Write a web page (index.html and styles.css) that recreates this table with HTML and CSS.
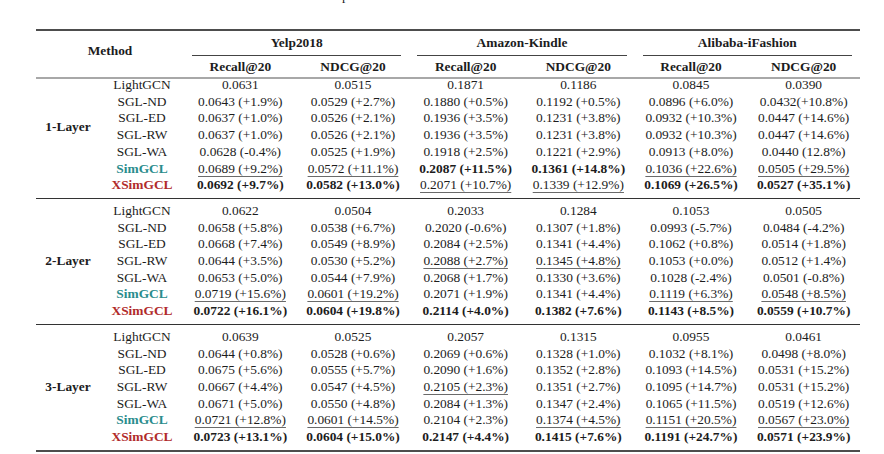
FILE: index.html
```html
<!DOCTYPE html>
<html>
<head>
<meta charset="utf-8">
<link rel="stylesheet" href="styles.css">
</head>
<body>
<div class="page">
  <div class="caption"><span class="cap-text">p</span></div>
  <div class="rule-thick"></div>
  <div class="head">
    <div class="method">Method</div>
    <div class="group">Yelp2018</div>
    <div class="group">Amazon-Kindle</div>
    <div class="group">Alibaba-iFashion</div>
    <div class="sub">Recall@20</div>
    <div class="sub">NDCG@20</div>
    <div class="sub">Recall@20</div>
    <div class="sub">NDCG@20</div>
    <div class="sub">Recall@20</div>
    <div class="sub">NDCG@20</div>
  </div>
  <div class="midrule"></div>

  <div class="block first">
    <div class="lbl span6">1-Layer</div>
    <div class="m">LightGCN</div><div class="c">0.0631</div><div class="c">0.0515</div><div class="c">0.1871</div><div class="c">0.1186</div><div class="c">0.0845</div><div class="c">0.0390</div>
    <div class="m">SGL-ND</div><div class="c">0.0643 (+1.9%)</div><div class="c">0.0529 (+2.7%)</div><div class="c">0.1880 (+0.5%)</div><div class="c">0.1192 (+0.5%)</div><div class="c">0.0896 (+6.0%)</div><div class="c">0.0432(+10.8%)</div>
    <div class="m">SGL-ED</div><div class="c">0.0637 (+1.0%)</div><div class="c">0.0526 (+2.1%)</div><div class="c">0.1936 (+3.5%)</div><div class="c">0.1231 (+3.8%)</div><div class="c">0.0932 (+10.3%)</div><div class="c">0.0447 (+14.6%)</div>
    <div class="m">SGL-RW</div><div class="c">0.0637 (+1.0%)</div><div class="c">0.0526 (+2.1%)</div><div class="c">0.1936 (+3.5%)</div><div class="c">0.1231 (+3.8%)</div><div class="c">0.0932 (+10.3%)</div><div class="c">0.0447 (+14.6%)</div>
    <div class="m">SGL-WA</div><div class="c">0.0628 (-0.4%)</div><div class="c">0.0525 (+1.9%)</div><div class="c">0.1918 (+2.5%)</div><div class="c">0.1221 (+2.9%)</div><div class="c">0.0913 (+8.0%)</div><div class="c">0.0440 (12.8%)</div>
    <div class="m sim">SimGCL</div><div class="c"><span class="u">0.0689 (+9.2%)</span></div><div class="c"><span class="u">0.0572 (+11.1%)</span></div><div class="c b">0.2087 (+11.5%)</div><div class="c b">0.1361 (+14.8%)</div><div class="c"><span class="u">0.1036 (+22.6%)</span></div><div class="c"><span class="u">0.0505 (+29.5%)</span></div>
    <div class="m xsim">XSimGCL</div><div class="c b">0.0692 (+9.7%)</div><div class="c b">0.0582 (+13.0%)</div><div class="c"><span class="u">0.2071 (+10.7%)</span></div><div class="c"><span class="u">0.1339 (+12.9%)</span></div><div class="c b">0.1069 (+26.5%)</div><div class="c b">0.0527 (+35.1%)</div>
  </div>
  <div class="rule"></div>

  <div class="block second">
    <div class="lbl span7">2-Layer</div>
    <div class="m">LightGCN</div><div class="c">0.0622</div><div class="c">0.0504</div><div class="c">0.2033</div><div class="c">0.1284</div><div class="c">0.1053</div><div class="c">0.0505</div>
    <div class="m">SGL-ND</div><div class="c">0.0658 (+5.8%)</div><div class="c">0.0538 (+6.7%)</div><div class="c">0.2020 (-0.6%)</div><div class="c">0.1307 (+1.8%)</div><div class="c">0.0993 (-5.7%)</div><div class="c">0.0484 (-4.2%)</div>
    <div class="m">SGL-ED</div><div class="c">0.0668 (+7.4%)</div><div class="c">0.0549 (+8.9%)</div><div class="c">0.2084 (+2.5%)</div><div class="c">0.1341 (+4.4%)</div><div class="c">0.1062 (+0.8%)</div><div class="c">0.0514 (+1.8%)</div>
    <div class="m">SGL-RW</div><div class="c">0.0644 (+3.5%)</div><div class="c">0.0530 (+5.2%)</div><div class="c"><span class="u">0.2088 (+2.7%)</span></div><div class="c"><span class="u">0.1345 (+4.8%)</span></div><div class="c">0.1053 (+0.0%)</div><div class="c">0.0512 (+1.4%)</div>
    <div class="m">SGL-WA</div><div class="c">0.0653 (+5.0%)</div><div class="c">0.0544 (+7.9%)</div><div class="c">0.2068 (+1.7%)</div><div class="c">0.1330 (+3.6%)</div><div class="c">0.1028 (-2.4%)</div><div class="c">0.0501 (-0.8%)</div>
    <div class="m sim">SimGCL</div><div class="c"><span class="u">0.0719 (+15.6%)</span></div><div class="c"><span class="u">0.0601 (+19.2%)</span></div><div class="c">0.2071 (+1.9%)</div><div class="c">0.1341 (+4.4%)</div><div class="c"><span class="u">0.1119 (+6.3%)</span></div><div class="c"><span class="u">0.0548 (+8.5%)</span></div>
    <div class="m xsim">XSimGCL</div><div class="c b">0.0722 (+16.1%)</div><div class="c b">0.0604 (+19.8%)</div><div class="c b">0.2114 (+4.0%)</div><div class="c b">0.1382 (+7.6%)</div><div class="c b">0.1143 (+8.5%)</div><div class="c b">0.0559 (+10.7%)</div>
  </div>
  <div class="rule"></div>

  <div class="block third">
    <div class="lbl span7">3-Layer</div>
    <div class="m">LightGCN</div><div class="c">0.0639</div><div class="c">0.0525</div><div class="c">0.2057</div><div class="c">0.1315</div><div class="c">0.0955</div><div class="c">0.0461</div>
    <div class="m">SGL-ND</div><div class="c">0.0644 (+0.8%)</div><div class="c">0.0528 (+0.6%)</div><div class="c">0.2069 (+0.6%)</div><div class="c">0.1328 (+1.0%)</div><div class="c">0.1032 (+8.1%)</div><div class="c">0.0498 (+8.0%)</div>
    <div class="m">SGL-ED</div><div class="c">0.0675 (+5.6%)</div><div class="c">0.0555 (+5.7%)</div><div class="c">0.2090 (+1.6%)</div><div class="c">0.1352 (+2.8%)</div><div class="c">0.1093 (+14.5%)</div><div class="c">0.0531 (+15.2%)</div>
    <div class="m">SGL-RW</div><div class="c">0.0667 (+4.4%)</div><div class="c">0.0547 (+4.5%)</div><div class="c"><span class="u">0.2105 (+2.3%)</span></div><div class="c">0.1351 (+2.7%)</div><div class="c">0.1095 (+14.7%)</div><div class="c">0.0531 (+15.2%)</div>
    <div class="m">SGL-WA</div><div class="c">0.0671 (+5.0%)</div><div class="c">0.0550 (+4.8%)</div><div class="c">0.2084 (+1.3%)</div><div class="c">0.1347 (+2.4%)</div><div class="c">0.1065 (+11.5%)</div><div class="c">0.0519 (+12.6%)</div>
    <div class="m sim">SimGCL</div><div class="c"><span class="u">0.0721 (+12.8%)</span></div><div class="c"><span class="u">0.0601 (+14.5%)</span></div><div class="c">0.2104 (+2.3%)</div><div class="c"><span class="u">0.1374 (+4.5%)</span></div><div class="c"><span class="u">0.1151 (+20.5%)</span></div><div class="c"><span class="u">0.0567 (+23.0%)</span></div>
    <div class="m xsim">XSimGCL</div><div class="c b">0.0723 (+13.1%)</div><div class="c b">0.0604 (+15.0%)</div><div class="c b">0.2147 (+4.4%)</div><div class="c b">0.1415 (+7.6%)</div><div class="c b">0.1191 (+24.7%)</div><div class="c b">0.0571 (+23.9%)</div>
  </div>
  <div class="rule-thick bottom"></div>
</div>
</body>
</html>
```

FILE: styles.css
```css
html, body {
  margin: 0;
  padding: 0;
  background: #ffffff;
}

body {
  font-family: "Liberation Serif", "Times New Roman", serif;
  font-size: 13.4px;
  color: #1c1c1c;
}

.page {
  width: 824px;
  margin-left: 36px;
}

.caption {
  height: 5px;
  overflow: hidden;
  padding-left: 306px;
  margin-bottom: 24px;
}

.cap-text {
  display: block;
  line-height: 14px;
  margin-top: -11px;
}

.rule-thick {
  height: 2px;
  background: #4d4d4d;
}

.head,
.block {
  display: grid;
  grid-template-columns: 64px 84px repeat(6, 1fr);
}

.method {
  grid-column: 1 / 3;
  grid-row: 1 / 3;
  text-align: center;
  font-weight: 700;
  line-height: 16.7px;
  padding-top: 11.7px;
}

.group {
  grid-column: span 2;
  margin: 0 8px;
  padding: 3.7px 0;
  line-height: 16.7px;
  border-bottom: 1px solid #444444;
  text-align: center;
  font-weight: 700;
}

.sub {
  text-align: center;
  font-weight: 700;
  line-height: 16.7px;
  padding: 2.6px 0 1.7px;
}

.midrule {
  height: 2px;
  background: #a8a8a8;
}

.block {
  grid-auto-rows: 16.7px;
  line-height: 16.7px;
}

.block.first {
  margin-top: -2px;
  padding-bottom: 4.3px;
}

.block.second {
  padding: 3.7px 0 4.4px;
}

.block.third {
  padding: 3.9px 0 4.2px;
}

.rule {
  height: 1px;
  background: #333333;
}

.lbl {
  grid-column: 1;
  align-self: center;
  text-align: center;
  font-weight: 700;
}

.span6 {
  grid-row: 1 / span 6;
}

.span7 {
  grid-row: 1 / span 7;
}

.m {
  grid-column: 2;
  text-align: center;
  white-space: nowrap;
}

.c {
  text-align: center;
  white-space: nowrap;
}

.b {
  font-weight: 700;
}

.u {
  text-decoration: underline;
  text-decoration-color: #6a6a6a;
  text-decoration-thickness: 1px;
  text-underline-offset: 3px;
}

.sim {
  color: #2a8c8c;
  font-weight: 700;
}

.xsim {
  color: #b12a2a;
  font-weight: 700;
}
```
